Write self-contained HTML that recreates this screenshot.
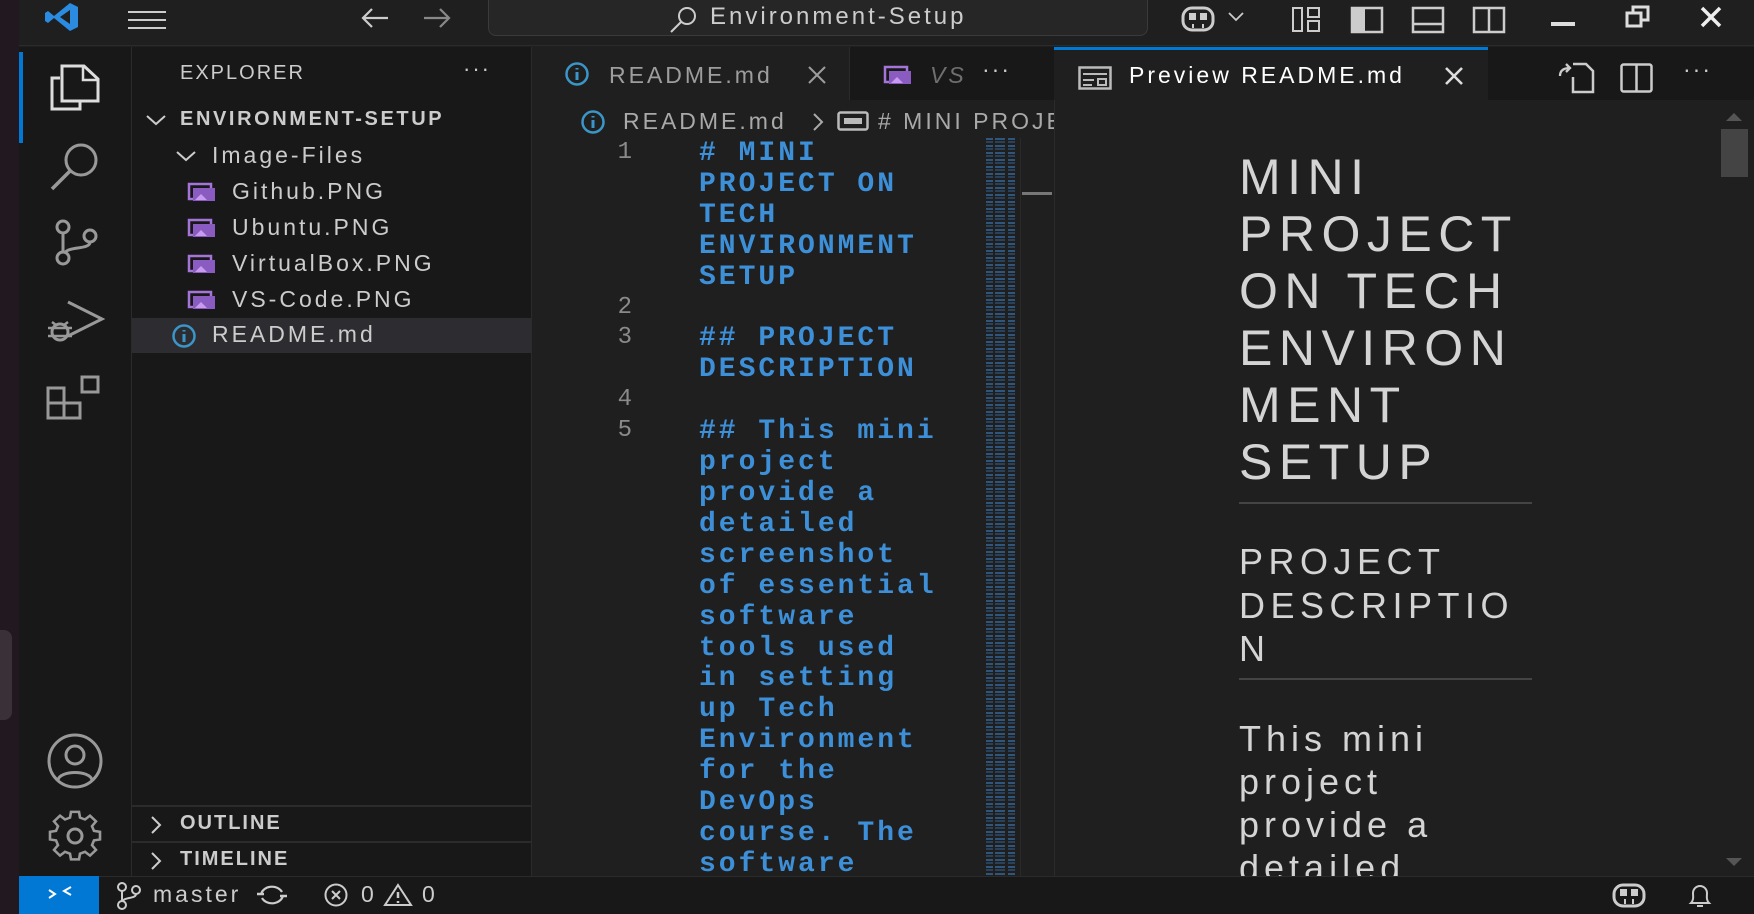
<!DOCTYPE html>
<html><head><meta charset="utf-8">
<style>
*{margin:0;padding:0;box-sizing:border-box}
body{width:1754px;height:914px;overflow:hidden;background:#1f1f1f;font-family:"Liberation Sans",sans-serif;color:#cccccc;position:relative}
.a{position:absolute}
.ui{font-size:23px;white-space:nowrap;letter-spacing:3px}
svg{position:absolute;overflow:visible}
.code{font-family:"Liberation Mono",monospace;font-weight:bold;color:#3d8fd8;font-size:28px;letter-spacing:3px;white-space:pre;line-height:30.9px}
.ln{font-family:"Liberation Mono",monospace;color:#8a8a8a;font-size:24px;line-height:30.9px;white-space:pre;text-align:right}
.pv{color:#d4d4d4;white-space:nowrap}
</style></head><body>
<div class="a" style="left:0;top:0;width:19px;height:914px;background:#221820"></div>
<div class="a" style="left:0;top:630px;width:12px;height:90px;background:#3a3038;border-radius:0 8px 8px 0"></div>
<div class="a" style="left:19px;top:0;width:1735px;height:46px;background:#1f1f1f;border-bottom:1px solid #2b2b2b"></div>
<svg style="left:44px;top:2px" width="36" height="30" viewBox="0 0 36 30"><path d="M26 1 L34 5 V25 L26 29 L10 16 L4 21 L1 19 V11 L4 9 L10 14 Z M26 8 L16 15 L26 22 Z" fill="#2a8be0"/></svg>
<svg style="left:128px;top:10px" width="38" height="20"><path d="M0 2H38M0 10H38M0 18H38" stroke="#ccc" stroke-width="2"/></svg>
<svg style="left:360px;top:6px" width="30" height="24"><path d="M28 12H3M12 3L3 12L12 21" stroke="#ccc" stroke-width="2.2" fill="none"/></svg>
<svg style="left:422px;top:6px" width="30" height="24"><path d="M2 12H27M18 3L27 12L18 21" stroke="#888" stroke-width="2.2" fill="none"/></svg>
<div class="a" style="left:488px;top:-8px;width:660px;height:44px;border:1px solid #3a3a3a;border-radius:8px;background:#262626"></div>
<svg style="left:668px;top:5px" width="32" height="28"><circle cx="19" cy="11" r="8" stroke="#ccc" stroke-width="2" fill="none"/><path d="M13 17L3 27" stroke="#ccc" stroke-width="2"/></svg>
<div class="a ui" style="left:710px;top:3px;font-size:24px;color:#cccccc">Environment-Setup</div>
<svg style="left:1180px;top:5px" width="36" height="28"><rect x="3" y="3" width="30" height="22" rx="9" stroke="#ccc" stroke-width="3" fill="none"/><rect x="9" y="8" width="7" height="7" fill="#ccc"/><rect x="20" y="8" width="7" height="7" fill="#ccc"/><path d="M13 19v4M23 19v4" stroke="#ccc" stroke-width="2"/></svg>
<svg style="left:1228px;top:12px" width="16" height="10"><path d="M1 1L8 8L15 1" stroke="#ccc" stroke-width="1.8" fill="none"/></svg>
<svg style="left:1292px;top:7px" width="30" height="26"><rect x="1" y="1" width="9" height="23" stroke="#ccc" stroke-width="2" fill="none"/><rect x="16" y="1" width="11" height="9" stroke="#ccc" stroke-width="2" fill="none"/><rect x="16" y="14" width="11" height="10" stroke="#ccc" stroke-width="2" fill="none"/></svg>
<svg style="left:1351px;top:7px" width="32" height="26"><rect x="1" y="1" width="30" height="24" stroke="#ccc" stroke-width="2.5" fill="none"/><rect x="1" y="1" width="13" height="24" fill="#ccc"/></svg>
<svg style="left:1412px;top:7px" width="32" height="26"><rect x="1" y="1" width="30" height="24" stroke="#ccc" stroke-width="2.5" fill="none"/><path d="M1 17H31" stroke="#ccc" stroke-width="2.5"/></svg>
<svg style="left:1473px;top:7px" width="32" height="26"><rect x="1" y="1" width="30" height="24" stroke="#ccc" stroke-width="2.5" fill="none"/><path d="M16 1V25" stroke="#ccc" stroke-width="2.5"/></svg>
<div class="a" style="left:1551px;top:22px;width:24px;height:4px;background:#ddd"></div>
<svg style="left:1625px;top:5px" width="26" height="24"><rect x="2" y="8" width="14" height="13" stroke="#ddd" stroke-width="3" fill="none"/><path d="M8 8V2H23V15H16" stroke="#ddd" stroke-width="3" fill="none"/></svg>
<svg style="left:1700px;top:6px" width="22" height="22"><path d="M2 2L20 20M20 2L2 20" stroke="#eee" stroke-width="3.5"/></svg>

<div class="a" style="left:19px;top:47px;width:113px;height:829px;background:#181818;border-right:1px solid #2b2b2b"></div>
<div class="a" style="left:19px;top:52px;width:4px;height:91px;background:#0078d4"></div>
<svg style="left:49px;top:64px" width="52" height="46"><path d="M11 14H3V45H31V37" stroke="#ddd" stroke-width="3" fill="none"/><path d="M13 2H35L49 15V37H13Z" stroke="#ddd" stroke-width="3" fill="none"/><path d="M34 2V16H49" stroke="#ddd" stroke-width="2.5" fill="none"/></svg>
<svg style="left:50px;top:140px" width="56" height="52"><circle cx="31" cy="20" r="15" stroke="#999" stroke-width="3" fill="none"/><path d="M20 31L2 49" stroke="#999" stroke-width="3.5"/></svg>
<svg style="left:54px;top:218px" width="46" height="48"><circle cx="9" cy="9" r="6" stroke="#999" stroke-width="3" fill="none"/><circle cx="9" cy="40" r="6" stroke="#999" stroke-width="3" fill="none"/><circle cx="36" cy="18" r="6" stroke="#999" stroke-width="3" fill="none"/><path d="M9 15V34M36 24C36 32 14 28 11 35" stroke="#999" stroke-width="3" fill="none"/></svg>
<svg style="left:46px;top:298px" width="60" height="46"><path d="M22 4L56 21L22 38" stroke="#999" stroke-width="3" fill="none"/><circle cx="14" cy="34" r="8" stroke="#999" stroke-width="3" fill="none"/><path d="M2 30H26M2 38H26M6 24L10 27M22 24L18 27" stroke="#999" stroke-width="2.5"/></svg>
<svg style="left:46px;top:374px" width="58" height="46"><rect x="2" y="14" width="16" height="15" stroke="#999" stroke-width="3" fill="none"/><rect x="2" y="29" width="16" height="15" stroke="#999" stroke-width="3" fill="none"/><rect x="18" y="29" width="16" height="15" stroke="#999" stroke-width="3" fill="none"/><rect x="36" y="3" width="16" height="15" stroke="#999" stroke-width="3" fill="none"/></svg>
<svg style="left:46px;top:737px" width="58" height="48"><circle cx="29" cy="24" r="26" stroke="#999" stroke-width="3" fill="none"/><circle cx="29" cy="18" r="9" stroke="#999" stroke-width="3" fill="none"/><path d="M12 43C14 33 44 33 46 43" stroke="#999" stroke-width="3" fill="none"/></svg>
<svg style="left:46px;top:812px" width="58" height="50"><circle cx="29" cy="24" r="7" stroke="#999" stroke-width="3" fill="none"/><path d="M25 2h8l1 6 5 2 5-4 6 6-4 5 2 5 6 1v8l-6 1-2 5 4 5-6 6-5-4-5 2-1 6h-8l-1-6-5-2-5 4-6-6 4-5-2-5-6-1v-8l6-1 2-5-4-5 6-6 5 4 5-2z" stroke="#999" stroke-width="2.6" fill="none" transform="translate(0,-2) scale(1,0.95)"/></svg>

<div class="a" style="left:132px;top:47px;width:400px;height:829px;background:#181818;border-right:1px solid #2b2b2b"></div>
<div class="a ui" style="left:180px;top:62px;font-size:20px;letter-spacing:2px;color:#cccccc">EXPLORER</div>
<div class="a ui" style="left:463px;top:56px;font-size:22px;letter-spacing:2px">···</div>
<svg style="left:145px;top:114px" width="22" height="12"><path d="M2 2L11 10L20 2" stroke="#ccc" stroke-width="2" fill="none"/></svg>
<div class="a ui" style="left:180px;top:108px;font-size:20px;font-weight:bold;letter-spacing:2.6px;color:#cccccc">ENVIRONMENT-SETUP</div>
<svg style="left:175px;top:150px" width="22" height="12"><path d="M2 2L11 10L20 2" stroke="#ccc" stroke-width="2" fill="none"/></svg>
<div class="a ui" style="left:212px;top:142px">Image-Files</div>
<div class="a" style="left:132px;top:318px;width:399px;height:35px;background:#2d2d31"></div>
<div class="a ui" style="left:232px;top:178px">Github.PNG</div>
<div class="a ui" style="left:232px;top:214px">Ubuntu.PNG</div>
<div class="a ui" style="left:232px;top:250px">VirtualBox.PNG</div>
<div class="a ui" style="left:232px;top:286px">VS-Code.PNG</div>
<div class="a ui" style="left:212px;top:321px">README.md</div>
<svg style="left:188px;top:182px" width="30" height="160">
<g><rect x="1" y="2" width="22" height="15" stroke="#a474d8" stroke-width="2.5" fill="none"/><rect x="5" y="6" width="22" height="13" fill="#8a5cc2"/><path d="M7 18L13 12L19 18" fill="#c89bf0"/></g>
<g transform="translate(0,36)"><rect x="1" y="2" width="22" height="15" stroke="#a474d8" stroke-width="2.5" fill="none"/><rect x="5" y="6" width="22" height="13" fill="#8a5cc2"/><path d="M7 18L13 12L19 18" fill="#c89bf0"/></g>
<g transform="translate(0,72)"><rect x="1" y="2" width="22" height="15" stroke="#a474d8" stroke-width="2.5" fill="none"/><rect x="5" y="6" width="22" height="13" fill="#8a5cc2"/><path d="M7 18L13 12L19 18" fill="#c89bf0"/></g>
<g transform="translate(0,108)"><rect x="1" y="2" width="22" height="15" stroke="#a474d8" stroke-width="2.5" fill="none"/><rect x="5" y="6" width="22" height="13" fill="#8a5cc2"/><path d="M7 18L13 12L19 18" fill="#c89bf0"/></g>
</svg>
<svg style="left:171px;top:324px" width="28" height="24"><circle cx="13" cy="12" r="10.5" stroke="#3a96c8" stroke-width="2.5" fill="none"/><path d="M13 10V18M13 6V7.5" stroke="#3a96c8" stroke-width="3"/></svg>
<div class="a" style="left:132px;top:805px;width:399px;height:2px;background:#2b2b2b"></div>
<div class="a" style="left:132px;top:841px;width:399px;height:2px;background:#2b2b2b"></div>
<svg style="left:150px;top:815px" width="12" height="20"><path d="M2 2L10 10L2 18" stroke="#ccc" stroke-width="2" fill="none"/></svg>
<svg style="left:150px;top:851px" width="12" height="20"><path d="M2 2L10 10L2 18" stroke="#ccc" stroke-width="2" fill="none"/></svg>
<div class="a ui" style="left:180px;top:812px;font-size:20px;font-weight:bold;letter-spacing:2px">OUTLINE</div>
<div class="a ui" style="left:180px;top:848px;font-size:20px;font-weight:bold;letter-spacing:2px">TIMELINE</div>

<div class="a" style="left:532px;top:47px;width:522px;height:54px;background:#181818"></div>
<div class="a" style="left:532px;top:47px;width:318px;height:54px;background:#1f1f1f;border-right:1px solid #2b2b2b"></div>
<svg style="left:564px;top:62px" width="28" height="24"><circle cx="13" cy="12" r="10.5" stroke="#3a96c8" stroke-width="2.5" fill="none"/><path d="M13 10V18M13 6V7.5" stroke="#3a96c8" stroke-width="3"/></svg>
<div class="a ui" style="left:609px;top:62px;color:#9d9d9d">README.md</div>
<svg style="left:807px;top:65px" width="20" height="20"><path d="M2 2L18 18M18 2L2 18" stroke="#9d9d9d" stroke-width="2"/></svg>
<svg style="left:884px;top:65px" width="30" height="24"><rect x="1" y="2" width="22" height="15" stroke="#a474d8" stroke-width="2.5" fill="none"/><rect x="5" y="6" width="22" height="13" fill="#8a5cc2"/><path d="M7 18L13 12L19 18" fill="#c89bf0"/></svg>
<div class="a ui" style="left:930px;top:62px;color:#6f6f6f;font-style:italic">VS</div>
<div class="a ui" style="left:982px;top:56px;letter-spacing:2px">···</div>
<div class="a" style="left:532px;top:100px;width:522px;height:776px;background:#1f1f1f"></div>
<svg style="left:580px;top:110px" width="28" height="24"><circle cx="13" cy="12" r="10.5" stroke="#3a96c8" stroke-width="2.5" fill="none"/><path d="M13 10V18M13 6V7.5" stroke="#3a96c8" stroke-width="3"/></svg>
<div class="a ui" style="left:623px;top:108px;color:#a9a9a9">README.md</div>
<svg style="left:812px;top:112px" width="12" height="20"><path d="M2 2L10 10L2 18" stroke="#aaa" stroke-width="2" fill="none"/></svg>
<svg style="left:837px;top:111px" width="32" height="20"><rect x="1.5" y="1.5" width="29" height="17" rx="2" stroke="#bbb" stroke-width="2.5" fill="none"/><rect x="7" y="7" width="18" height="6" fill="#bbb"/></svg>
<div class="a ui" style="left:878px;top:108px;color:#a9a9a9;width:176px;overflow:hidden">#&nbsp;MINI PROJECT</div>
<div class="a" style="left:532px;top:138px;width:455px;height:738px;overflow:hidden">
<div class="a ln" style="left:60px;top:0;width:40px">1



 
2
3
 
4
5</div>
<div class="a code" style="left:167px;top:1px"># MINI
PROJECT ON
TECH
ENVIRONMENT
SETUP

## PROJECT
DESCRIPTION

## This mini
project
provide a
detailed
screenshot
of essential
software
tools used
in setting
up Tech
Environment
for the
DevOps
course. The
software</div>
</div>
<div class="a" style="left:986px;top:138px;width:30px;height:738px;background:repeating-linear-gradient(180deg,rgba(60,130,200,.55) 0 2px,transparent 2px 3px,rgba(60,130,200,.35) 3px 5px,transparent 5px 7px)"></div>
<div class="a" style="left:986px;top:138px;width:30px;height:738px;background:repeating-linear-gradient(90deg,transparent 0 7px,#1f1f1f 7px 9px,transparent 9px 19px,#1f1f1f 19px 22px)"></div>
<div class="a" style="left:1020px;top:138px;width:34px;height:738px;background:#1f1f1f;border-left:1px solid #2a2a2a"></div>
<div class="a" style="left:1022px;top:192px;width:30px;height:3px;background:#777"></div>

<div class="a" style="left:1054px;top:47px;width:700px;height:54px;background:#181818;border-left:1px solid #2b2b2b"></div>
<div class="a" style="left:1054px;top:47px;width:434px;height:54px;background:#1f1f1f;border-top:3px solid #0078d4"></div>
<svg style="left:1078px;top:66px" width="34" height="24"><rect x="1.5" y="1.5" width="31" height="21" stroke="#bbb" stroke-width="2.5" fill="none"/><path d="M5 8H29M5 14H16M5 19H14" stroke="#bbb" stroke-width="2"/><rect x="20" y="13" width="8" height="6" stroke="#bbb" stroke-width="2" fill="none"/></svg>
<div class="a ui" style="left:1129px;top:62px;color:#ffffff">Preview README.md</div>
<svg style="left:1444px;top:66px" width="20" height="20"><path d="M2 2L18 18M18 2L2 18" stroke="#ddd" stroke-width="2.6"/></svg>
<svg style="left:1556px;top:62px" width="40" height="32"><path d="M17 2H30L37 9V30H17V15" stroke="#ccc" stroke-width="2.5" fill="none"/><path d="M4 14C4 8 8 6 14 6M10 2L14 6L10 10" stroke="#ccc" stroke-width="2.3" fill="none"/></svg>
<svg style="left:1620px;top:63px" width="34" height="30"><rect x="1.5" y="1.5" width="30" height="27" rx="2" stroke="#ccc" stroke-width="2.5" fill="none"/><path d="M16.5 1.5V28.5" stroke="#ccc" stroke-width="2.5"/></svg>
<div class="a ui" style="left:1683px;top:56px;letter-spacing:2px">···</div>
<div class="a" style="left:1054px;top:100px;width:700px;height:776px;background:#1f1f1f;border-left:1px solid #2b2b2b;overflow:hidden">
<div class="a pv" style="left:184px;top:49px;font-size:50px;line-height:57px;letter-spacing:6.5px">MINI<br>PROJECT<br>ON TECH<br>ENVIRON<br>MENT<br>SETUP</div>
<div class="a" style="left:184px;top:402px;width:293px;height:2px;background:#444"></div>
<div class="a pv" style="left:184px;top:440px;font-size:36px;line-height:43.5px;letter-spacing:5.5px">PROJECT<br>DESCRIPTIO<br>N</div>
<div class="a" style="left:184px;top:578px;width:293px;height:2px;background:#444"></div>
<div class="a pv" style="left:184px;top:617px;font-size:36px;line-height:43px;letter-spacing:5px">This mini<br>project<br>provide a<br>detailed</div>
<div class="a" style="left:666px;top:29px;width:27px;height:48px;background:#444"></div>
<svg style="left:671px;top:12px" width="16" height="10"><path d="M0 9L8 1L16 9Z" fill="#555"/></svg>
<svg style="left:671px;top:757px" width="16" height="10"><path d="M0 1L8 9L16 1Z" fill="#555"/></svg>
</div>

<div class="a" style="left:19px;top:876px;width:1735px;height:38px;background:#181818;border-top:1px solid #2b2b2b"></div>
<div class="a" style="left:19px;top:876px;width:80px;height:38px;background:#0078d4"></div>
<svg style="left:47px;top:884px" width="26" height="20"><path d="M2 6L8 10L2 14M24 3L17 7L24 11" stroke="#fff" stroke-width="2" fill="none"/></svg>
<svg style="left:116px;top:882px" width="26" height="28"><circle cx="6" cy="5" r="4" stroke="#ccc" stroke-width="2" fill="none"/><circle cx="6" cy="23" r="4" stroke="#ccc" stroke-width="2" fill="none"/><circle cx="20" cy="8" r="4" stroke="#ccc" stroke-width="2" fill="none"/><path d="M6 9V19M20 12C20 17 8 15 7 19" stroke="#ccc" stroke-width="2" fill="none"/></svg>
<div class="a ui" style="left:153px;top:881px;color:#cccccc">master</div>
<svg style="left:256px;top:883px" width="32" height="24"><path d="M5 12A11 9 0 0 1 26 9M27 12A11 9 0 0 1 6 15" stroke="#ccc" stroke-width="2.2" fill="none"/><path d="M1 11H8M24 13H31" stroke="#ccc" stroke-width="2.5"/></svg>
<svg style="left:323px;top:883px" width="30" height="24"><circle cx="13" cy="12" r="10.5" stroke="#ccc" stroke-width="2" fill="none"/><path d="M9 8L17 16M17 8L9 16" stroke="#ccc" stroke-width="2"/></svg>
<div class="a ui" style="left:361px;top:881px">0</div>
<svg style="left:384px;top:883px" width="30" height="24"><path d="M14 2L27 22H1Z" stroke="#ccc" stroke-width="2" fill="none"/><path d="M14 9V15M14 18V20" stroke="#ccc" stroke-width="2.5"/></svg>
<div class="a ui" style="left:422px;top:881px">0</div>
<svg style="left:1611px;top:883px" width="36" height="26"><rect x="3" y="2" width="30" height="21" rx="9" stroke="#ccc" stroke-width="3" fill="none"/><rect x="9" y="6" width="7" height="7" fill="#ccc"/><rect x="20" y="6" width="7" height="7" fill="#ccc"/><path d="M14 16v5M22 16v5" stroke="#ccc" stroke-width="2"/></svg>
<svg style="left:1686px;top:882px" width="28" height="28"><path d="M5 21C8 18 7 14 7 11A7 7 0 0 1 21 11C21 14 20 18 23 21Z" stroke="#ccc" stroke-width="2" fill="none"/><path d="M11 24H17" stroke="#ccc" stroke-width="2"/></svg>
</body></html>
